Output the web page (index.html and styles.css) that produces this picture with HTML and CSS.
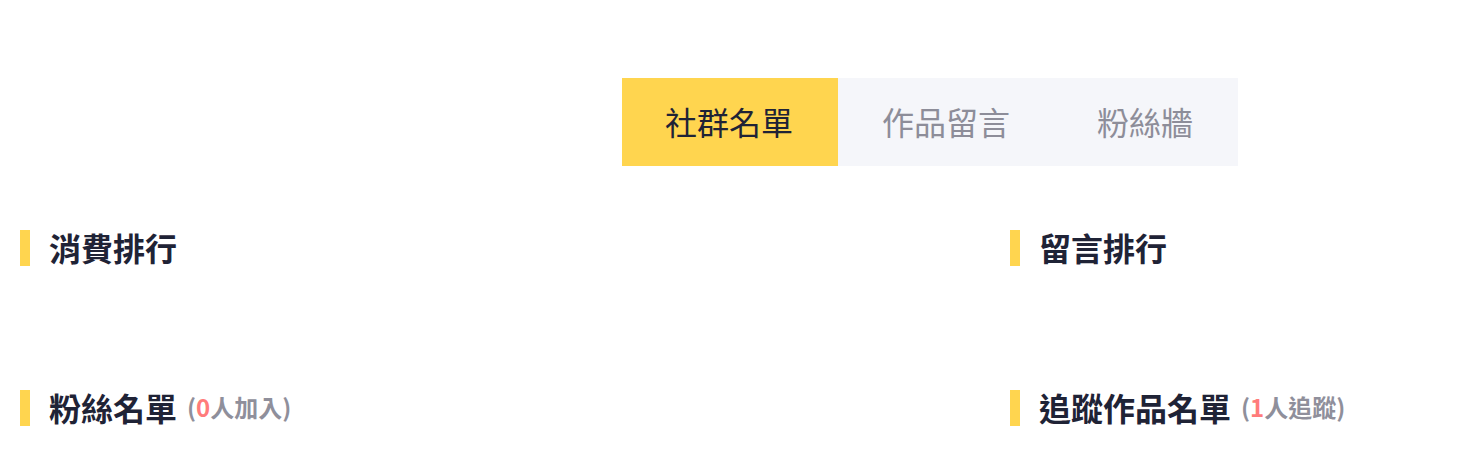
FILE: index.html
```html
<!DOCTYPE html>
<html lang="zh-Hant">
<head>
    <meta charset="UTF-8">
    <meta name="viewport" content="width=device-width, initial-scale=1.0">
    <title>社群名單</title>
    <link rel="stylesheet" href="styles.css">
</head>
<body>
    <div class="tabs">
        <a class="tab active" href="#">社群名單</a>
        <a class="tab" href="#">作品留言</a>
        <a class="tab" href="#">粉絲牆</a>
    </div>

    <div class="board">
        <section class="block">
            <h3 class="block-title"><span class="name">消費排行</span></h3>
        </section>
        <section class="block">
            <h3 class="block-title"><span class="name">留言排行</span></h3>
        </section>
        <section class="block">
            <h3 class="block-title"><span class="name">粉絲名單</span><span class="count">(<em>0</em>人加入)</span></h3>
        </section>
        <section class="block">
            <h3 class="block-title"><span class="name">追蹤作品名單</span><span class="count">(<em>1</em>人追蹤)</span></h3>
        </section>
    </div>
</body>
</html>
```

FILE: styles.css
```css
body {
    font-family: "Noto Sans CJK TC", "Noto Sans", sans-serif;
    background-color: #fff;
    color: #1f2336;
    margin: 0;
    padding: 0;
}
.tabs {
    display: flex;
    margin: 78px 0 0 622px;
}
.tab {
    display: block;
    height: 88px;
    line-height: 86px;
    padding: 0 44px 2px 44px;
    box-sizing: border-box;
    font-size: 32px;
    color: #8d8d99;
    background-color: #f5f6fa;
    text-decoration: none;
}
.tab:last-child {
    width: 184px;
    padding-left: 43px;
}
.tab.active {
    width: 216px;
    padding-left: 43px;
    background-color: #ffd54f;
    color: #1f2336;
}
.board {
    display: grid;
    grid-template-columns: 970px 1fr;
    column-gap: 20px;
    row-gap: 124px;
    padding: 64px 20px 0;
}
.block-title {
    display: flex;
    align-items: center;
    height: 36px;
    margin: 0;
    padding-left: 19px;
    border-left: 10px solid #ffd54f;
    font-size: 32px;
    font-weight: 700;
}
.block-title span {
    line-height: 32px;
    margin-bottom: 3px;
}
.count {
    margin-left: 10px;
    font-size: 24px;
    color: #8f8f9b;
}
.count em {
    font-style: normal;
    color: #ff7b7b;
}
```
